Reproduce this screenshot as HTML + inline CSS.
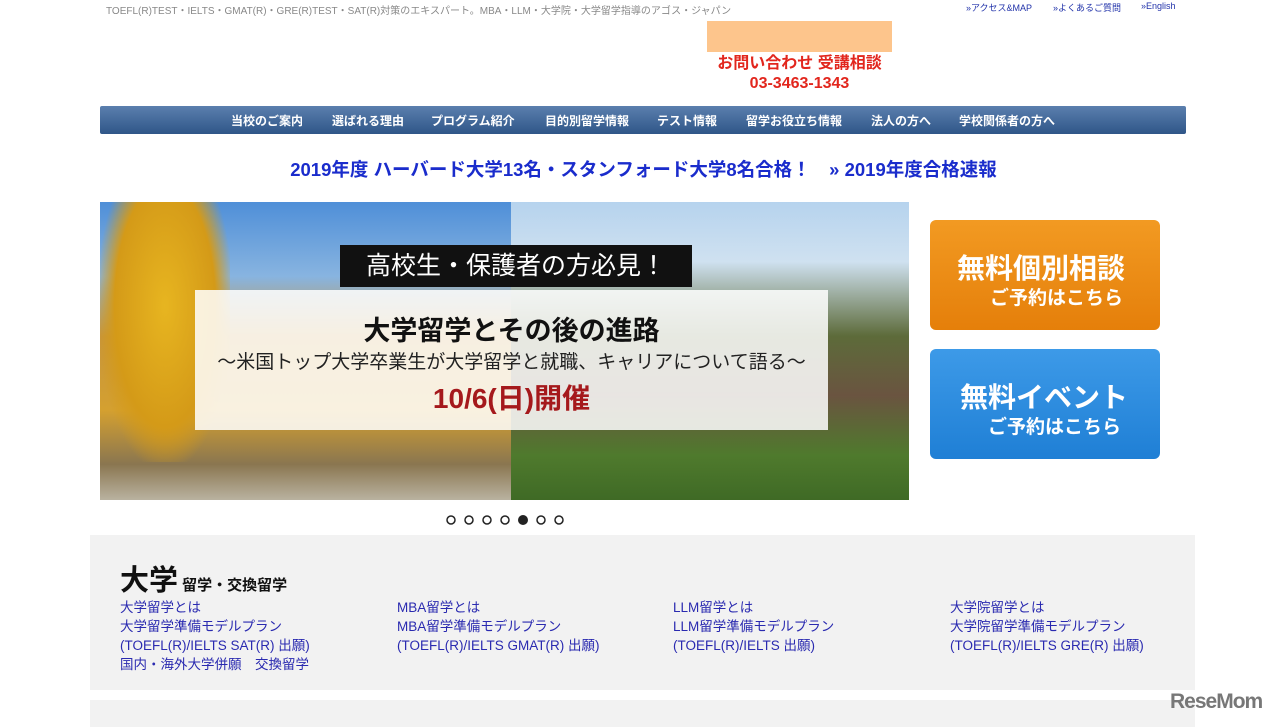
<!DOCTYPE html>
<html><head><meta charset="utf-8"><style>
*{margin:0;padding:0;box-sizing:border-box}
body{width:1280px;height:727px;overflow:hidden;background:#fff;font-family:"Liberation Sans","Noto Sans CJK JP",sans-serif;position:relative}
.a{position:absolute}
.top{left:106px;top:2px;font-size:10px;color:#888}
.tl{top:1px;font-size:9px;color:#2233aa}
.nav{left:100px;top:106px;width:1086px;height:28px;background:linear-gradient(#5b7fae,#2f5688);border-radius:2px;color:#fff;font-size:12px;font-weight:bold}
.nav span{position:absolute;top:6px}
.links a{display:block;color:#2a2ab0;font-size:13.5px;line-height:19px;text-decoration:none}
</style></head><body>
<div class="a top">TOEFL(R)TEST・IELTS・GMAT(R)・GRE(R)TEST・SAT(R)対策のエキスパート。MBA・LLM・大学院・大学留学指導のアゴス・ジャパン</div>
<div class="a tl" style="left:966px">»アクセス&amp;MAP</div>
<div class="a tl" style="left:1053px">»よくあるご質問</div>
<div class="a tl" style="left:1141px">»English</div>
<div class="a" style="left:707px;top:21px;width:185px;height:31px;background:#fdc58c"></div>
<div class="a" style="left:700px;top:54px;width:199px;text-align:center;color:#e2261d;font-weight:bold;font-size:16px;line-height:20px">お問い合わせ 受講相談<br>03-3463-1343</div>
<div class="a nav">
<span style="left:131px">当校のご案内</span><span style="left:232px">選ばれる理由</span><span style="left:331px">プログラム紹介</span><span style="left:445px">目的別留学情報</span><span style="left:557px">テスト情報</span><span style="left:646px">留学お役立ち情報</span><span style="left:771px">法人の方へ</span><span style="left:859px">学校関係者の方へ</span>
</div>
<div class="a" style="left:0;width:1287px;top:156px;text-align:center;color:#1a2ccc;font-weight:bold;font-size:18.5px">2019年度 ハーバード大学13名・スタンフォード大学8名合格！　» 2019年度合格速報</div>
<div class="a" style="left:100px;top:202px;width:411px;height:298px;background:linear-gradient(180deg,#4f8fd8 0%,#88b4e0 25%,#c7953c 45%,#d4a030 70%,#8a7650 88%,#b9b2a0 100%)"></div>
<div class="a" style="left:100px;top:202px;width:130px;height:260px;background:radial-gradient(ellipse at 50% 40%,#e7b520 0%,#d49a18 55%,transparent 75%)"></div>
<div class="a" style="left:511px;top:202px;width:398px;height:298px;background:linear-gradient(180deg,#b6d3ee 0%,#cfe1f0 20%,#5d6b3a 45%,#6a5440 65%,#4f7a2d 85%,#3f6a25 100%)"></div>
<div class="a" style="left:195px;top:290px;width:633px;height:140px;background:rgba(255,255,255,0.85)"></div>
<div class="a" style="left:340px;top:245px;width:352px;height:42px;background:#111;color:#fff;font-size:25px;text-align:center;line-height:42px">高校生・保護者の方必見！</div>
<div class="a" style="left:195px;top:309px;width:633px;text-align:center;font-size:27px;font-weight:bold;color:#111">大学留学とその後の進路</div>
<div class="a" style="left:195px;top:347px;width:633px;text-align:center;font-size:19px;color:#222">～米国トップ大学卒業生が大学留学と就職、キャリアについて語る～</div>
<div class="a" style="left:195px;top:377px;width:633px;text-align:center;font-size:28px;font-weight:bold;color:#a5191c">10/6(日)開催</div>
<div class="a" style="left:930px;top:220px;width:230px;height:110px;border-radius:6px;background:linear-gradient(#f29a22,#e57f0a);color:#fff;font-weight:bold">
<div style="position:absolute;left:27px;top:27px;font-size:28px">無料個別相談</div><div style="position:absolute;left:60px;top:63px;font-size:19px">ご予約はこちら</div></div>
<div class="a" style="left:930px;top:349px;width:230px;height:110px;border-radius:6px;background:linear-gradient(#3d9ae8,#1f7fd5);color:#fff;font-weight:bold">
<div style="position:absolute;left:30px;top:27px;font-size:28px">無料イベント</div><div style="position:absolute;left:58px;top:63px;font-size:19px">ご予約はこちら</div></div>
<svg class="a" style="left:440px;top:512px" width="130" height="16">
<g fill="none" stroke="#222" stroke-width="1.5"><circle cx="11" cy="8" r="4"/><circle cx="29" cy="8" r="4"/><circle cx="47" cy="8" r="4"/><circle cx="65" cy="8" r="4"/><circle cx="101" cy="8" r="4"/><circle cx="119" cy="8" r="4"/></g><circle cx="83" cy="8" r="5" fill="#222"/></svg>
<div class="a" style="left:90px;top:535px;width:1105px;height:155px;background:#f2f2f2"></div>
<div class="a" style="left:90px;top:700px;width:1105px;height:27px;background:#f2f2f2"></div>
<div class="a" style="left:120px;top:557px;font-size:29px;font-weight:bold;color:#111">大学<span style="font-size:15px"> 留学・交換留学</span></div>
<div class="a links" style="left:120px;top:598px"><a>大学留学とは</a><a>大学留学準備モデルプラン</a><a>(TOEFL(R)/IELTS SAT(R) 出願)</a><a>国内・海外大学併願　交換留学</a></div>
<div class="a links" style="left:397px;top:598px"><a>MBA留学とは</a><a>MBA留学準備モデルプラン</a><a>(TOEFL(R)/IELTS GMAT(R) 出願)</a></div>
<div class="a links" style="left:673px;top:598px"><a>LLM留学とは</a><a>LLM留学準備モデルプラン</a><a>(TOEFL(R)/IELTS 出願)</a></div>
<div class="a links" style="left:950px;top:598px"><a>大学院留学とは</a><a>大学院留学準備モデルプラン</a><a>(TOEFL(R)/IELTS GRE(R) 出願)</a></div>
<div class="a" style="left:1170px;top:690px;font-size:21px;font-weight:bold;color:#777;letter-spacing:-1px">ReseMom</div>
</body></html>
